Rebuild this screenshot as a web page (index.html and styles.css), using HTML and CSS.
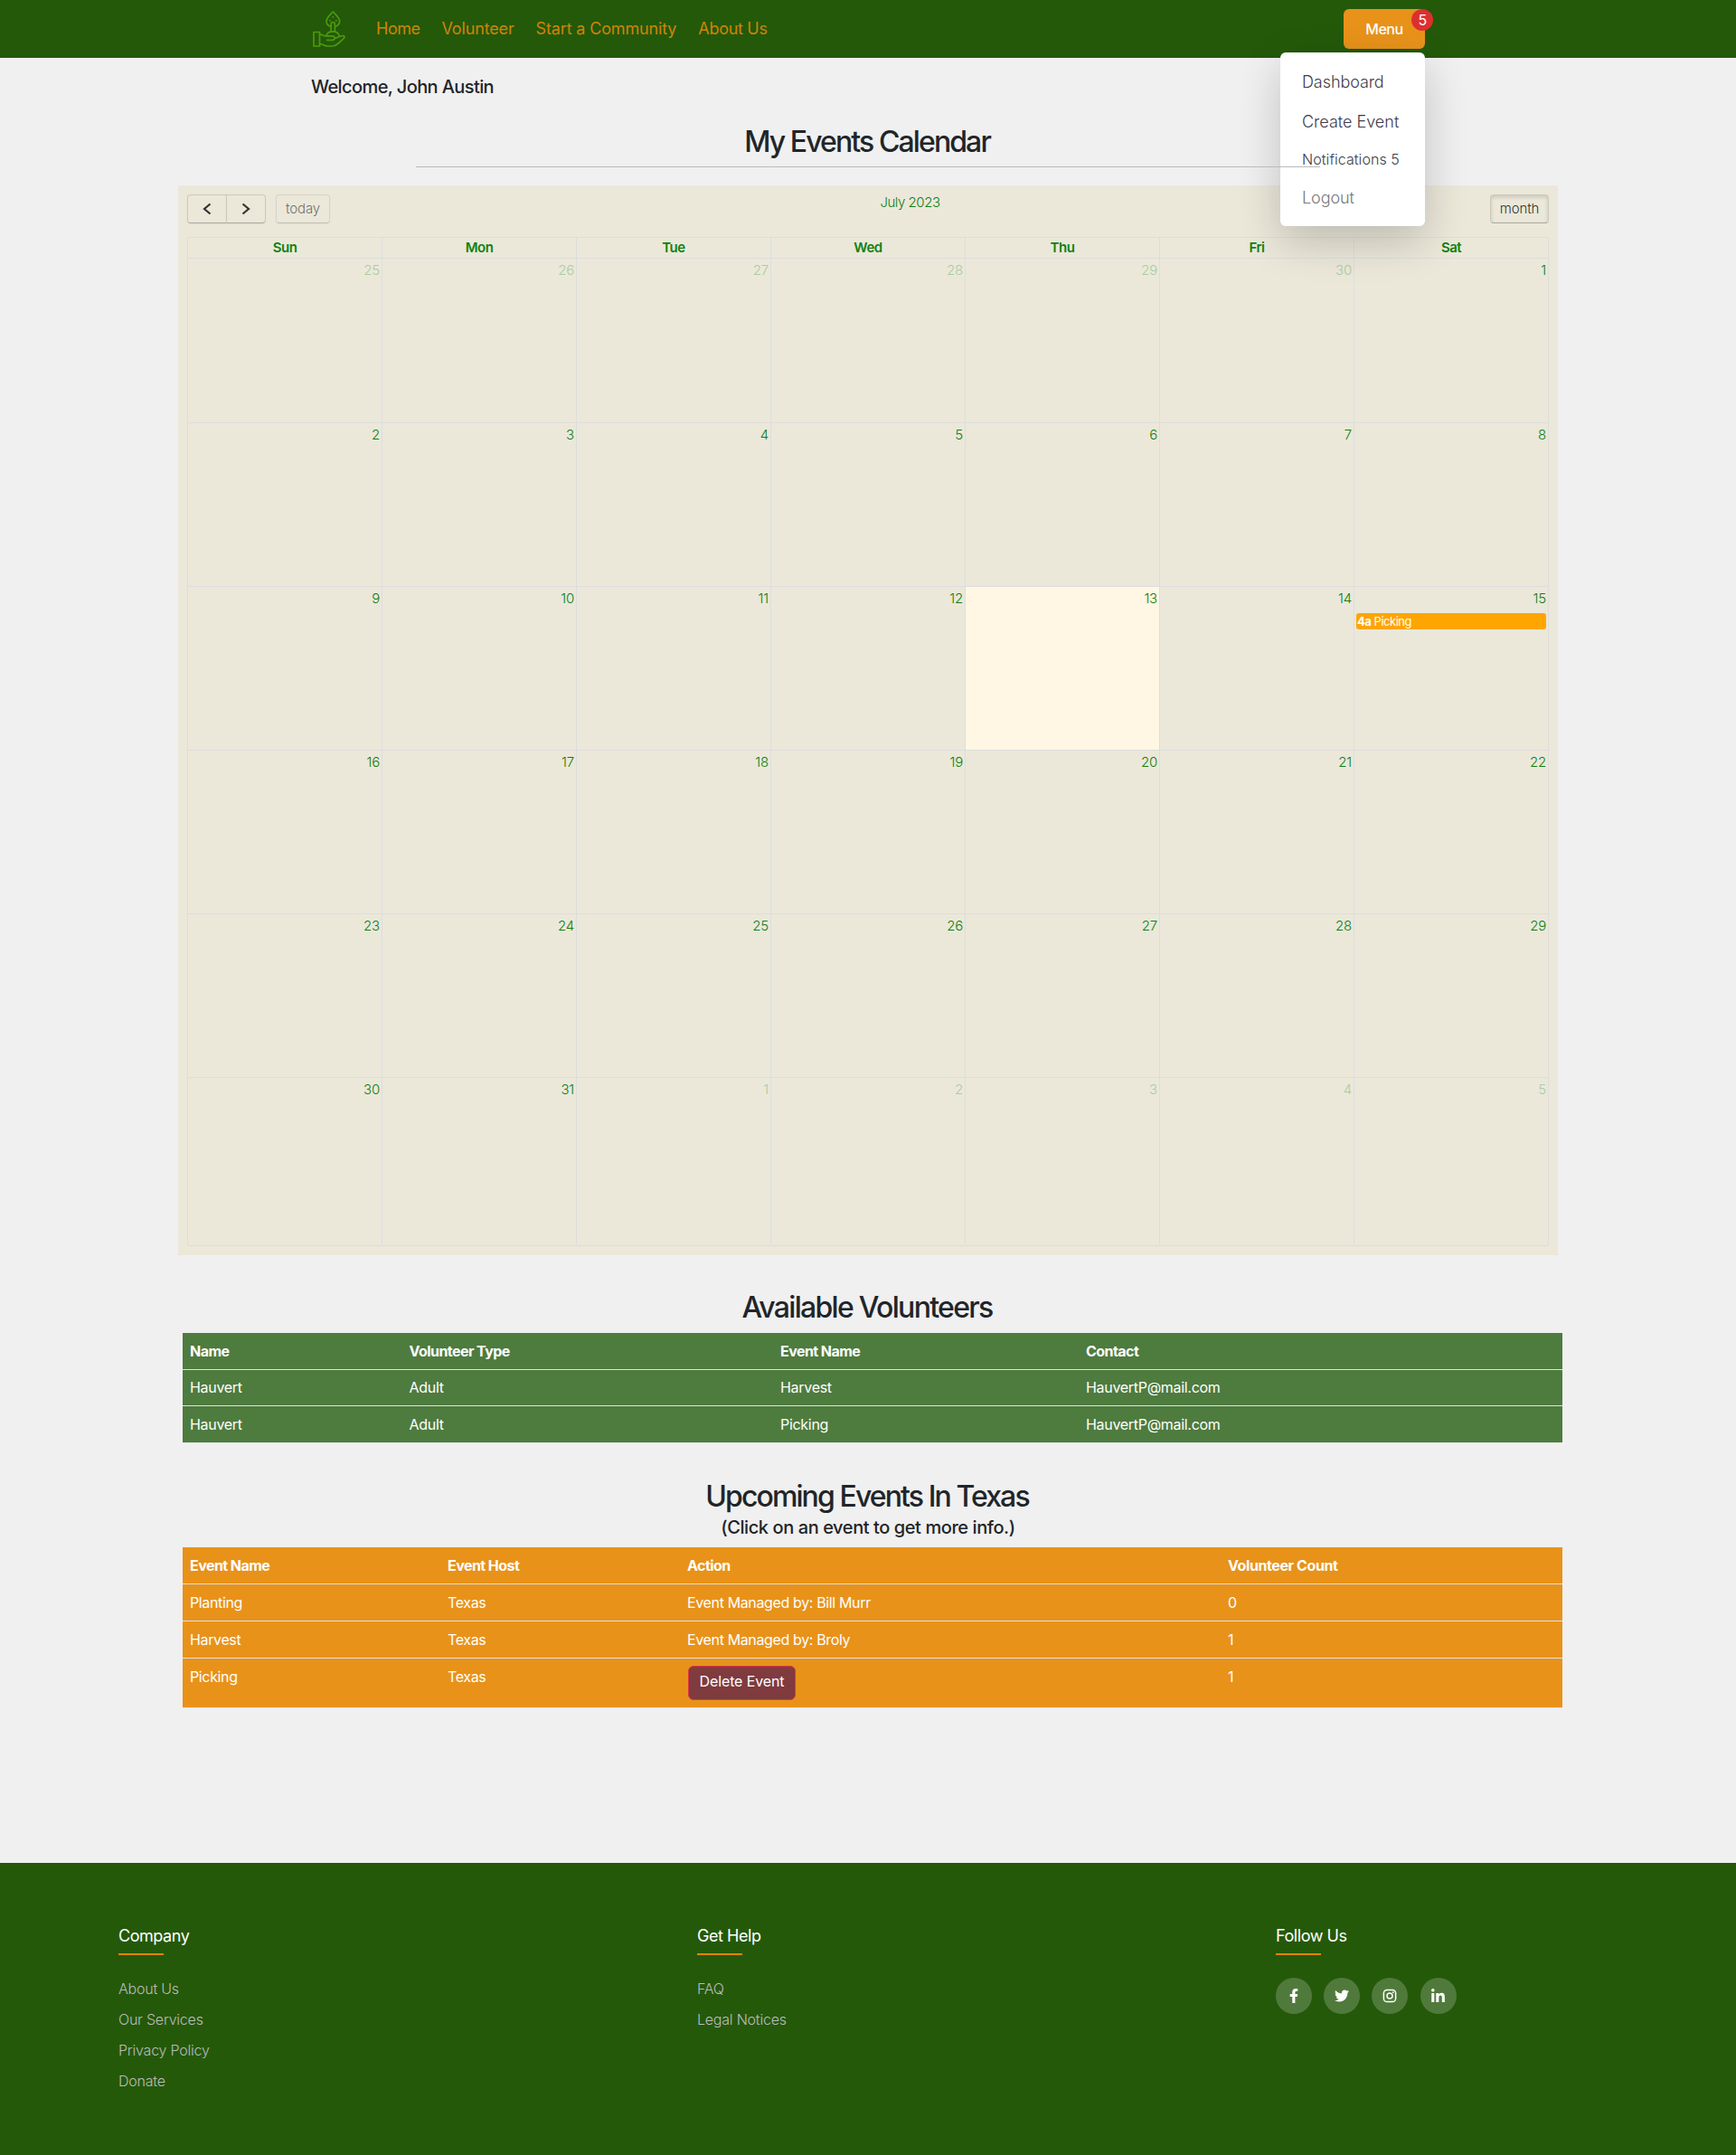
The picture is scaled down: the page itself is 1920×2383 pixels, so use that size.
FILE: index.html
```html
<!DOCTYPE html>
<html lang="en">
<head>
<meta charset="utf-8">
<title>My Events Calendar</title>
<link rel="stylesheet" href="styles.css">
</head>
<body>
<header class="navbar">
  <svg class="logo" viewBox="0 0 36 40" width="36" height="40" fill="none" stroke="#4b9a0b" stroke-width="1.7" stroke-linejoin="round" stroke-linecap="round">
    <path d="M19.500 17.200C16.500 16.400 15 14 15 11.300C15 7.500 19 4.500 22.300 1C25.600 4.500 29.600 7.500 29.600 11.300C29.600 14 28.100 16.400 25.100 17.200"/>
    <path d="M20.200 23V14.800a2.100 2.100 0 0 1 4.200 0V23"/>
    <path d="M14.800 27.400c.8-3 3.500-4.600 7.300-4.600s6.300 1.800 7 4.800"/>
    <path d="M1 23.500h6.500v15.500H1z"/>
    <path d="M7.500 25.800c2.500 0 3.800 2 6.500 2h7.700c3.200 0 3.200 4.500 0 4.500h-6M24.300 30.500l7.200-2.700c3-1 4.500 1 2.500 2.800L27.500 36.500c-2 1.800-3.500 2.500-6 2.500h-5.500c-3.500 0-5-2.500-8.500-2.500"/>
    <path d="M22.300 6.500v.400M19 10.700v.300M25.800 10.700v.300"/>
  </svg>
  <nav class="links">
    <a class="l-home">Home</a><a class="l-vol">Volunteer</a><a class="l-start">Start a Community</a><a class="l-about">About Us</a>
  </nav>
  <div class="menu">
    <button class="menu-btn">Menu</button>
    <span class="badge">5</span>
    <div class="dropdown">
      <a class="d-dash">Dashboard</a>
      <a class="d-create">Create Event</a>
      <a class="d-note">Notifications 5</a>
      <a class="d-out">Logout</a>
    </div>
  </div>
</header>
<main>
  <h5 class="welcome">Welcome, John Austin</h5>
  <h2 class="title t-cal">My Events Calendar</h2>
  <hr class="rule">
  <section class="calendar">
    <div class="toolbar">
      <div class="tool-left">
        <div class="group">
          <button class="cal-btn arrow"><svg width="10" height="14" viewBox="0 0 10 14"><path d="M8.500 1.500L2 7l6.500 5.500" fill="none" stroke="#333" stroke-width="2.200"/></svg></button><button class="cal-btn arrow"><svg width="10" height="14" viewBox="0 0 10 14"><path d="M1.500 1.500L8 7l-6.500 5.500" fill="none" stroke="#333" stroke-width="2.200"/></svg></button>
        </div>
        <button class="cal-btn today-btn">today</button>
      </div>
      <div class="cal-title">July 2023</div>
      <button class="cal-btn month-btn">month</button>
    </div>
    <div class="grid">
      <div class="week head"><b>Sun</b><b>Mon</b><b>Tue</b><b>Wed</b><b>Thu</b><b>Fri</b><b>Sat</b></div>
      <div class="week first"><div class="day other">25</div><div class="day other">26</div><div class="day other">27</div><div class="day other">28</div><div class="day other">29</div><div class="day other">30</div><div class="day">1</div></div>
      <div class="week"><div class="day">2</div><div class="day">3</div><div class="day">4</div><div class="day">5</div><div class="day">6</div><div class="day">7</div><div class="day">8</div></div>
      <div class="week"><div class="day">9</div><div class="day">10</div><div class="day">11</div><div class="day">12</div><div class="day now">13</div><div class="day">14</div><div class="day">15<div class="event"><b>4a</b> Picking</div></div></div>
      <div class="week"><div class="day">16</div><div class="day">17</div><div class="day">18</div><div class="day">19</div><div class="day">20</div><div class="day">21</div><div class="day">22</div></div>
      <div class="week"><div class="day">23</div><div class="day">24</div><div class="day">25</div><div class="day">26</div><div class="day">27</div><div class="day">28</div><div class="day">29</div></div>
      <div class="week last"><div class="day">30</div><div class="day">31</div><div class="day other">1</div><div class="day other">2</div><div class="day other">3</div><div class="day other">4</div><div class="day other">5</div></div>
    </div>
  </section>

  <h2 class="title t-vol">Available Volunteers</h2>
  <div class="table volunteers">
    <div class="row th"><span>Name</span><span>Volunteer Type</span><span>Event Name</span><span>Contact</span></div>
    <div class="row short"><span>Hauvert</span><span>Adult</span><span>Harvest</span><span>HauvertP@mail.com</span></div>
    <div class="row"><span>Hauvert</span><span>Adult</span><span>Picking</span><span>HauvertP@mail.com</span></div>
  </div>

  <h2 class="title t-up">Upcoming Events In Texas</h2>
  <h5 class="sub">(Click on an event to get more info.)</h5>
  <div class="table events">
    <div class="row th"><span>Event Name</span><span>Event Host</span><span>Action</span><span>Volunteer Count</span></div>
    <div class="row"><span>Planting</span><span>Texas</span><span>Event Managed by: Bill Murr</span><span>0</span></div>
    <div class="row"><span>Harvest</span><span>Texas</span><span>Event Managed by: Broly</span><span>1</span></div>
    <div class="row tall"><span>Picking</span><span>Texas</span><span><button class="delete">Delete Event</button></span><span>1</span></div>
  </div>
</main>
<footer class="footer">
  <div class="col"><h4 class="f-co">Company</h4><ul><li>About Us</li><li>Our Services</li><li>Privacy Policy</li><li>Donate</li></ul></div>
  <div class="col"><h4 class="f-help">Get Help</h4><ul><li>FAQ</li><li>Legal Notices</li></ul></div>
  <div class="col"><h4 class="f-follow">Follow Us</h4>
    <div class="social">
      <a><svg height="16" viewBox="0 0 320 512"><path d="M279.140 288l14.220-92.660h-88.910v-60.130c0-25.350 12.420-50.060 52.240-50.060h40.420V6.260S260.430 0 225.360 0c-73.220 0-121.080 44.380-121.080 124.720v70.620H22.890V288h81.390v224h100.170V288z"/></svg></a>
      <a><svg height="16" viewBox="0 0 512 512"><path d="M459.370 151.716c.325 4.548.325 9.097.325 13.645 0 138.720-105.583 298.558-298.558 298.558-59.452 0-114.680-17.219-161.137-47.106 8.447.974 16.568 1.299 25.340 1.299 49.055 0 94.213-16.568 130.274-44.832-46.132-.975-84.792-31.188-98.112-72.772 6.498.974 12.995 1.624 19.818 1.624 9.421 0 18.843-1.300 27.614-3.573-48.081-9.747-84.143-51.980-84.143-102.985v-1.299c13.969 7.797 30.214 12.670 47.431 13.319-28.264-18.843-46.781-51.005-46.781-87.391 0-19.492 5.197-37.360 14.294-52.954 51.655 63.675 129.300 105.258 216.365 109.807-1.624-7.797-2.599-15.918-2.599-24.040 0-57.828 46.782-104.934 104.934-104.934 30.213 0 57.502 12.670 76.670 33.137 23.715-4.548 46.456-13.320 66.599-25.340-7.798 24.366-24.366 44.833-46.132 57.827 21.117-2.273 41.584-8.122 60.426-16.243-14.292 20.791-32.161 39.308-52.628 54.253z"/></svg></a>
      <a><svg height="16" width="16" viewBox="0 0 16 16"><g fill="none" stroke="#fff" stroke-width="1.500"><rect x="1.400" y="1.400" width="13.200" height="13.200" rx="3.600"/><circle cx="8" cy="8" r="3"/></g><circle cx="11.800" cy="4.200" r=".9"/></svg></a>
      <a><svg height="17" viewBox="0 0 448 512"><path d="M100.280 448H7.400V148.900h92.880zM53.790 108.100C24.090 108.100 0 83.500 0 53.800a53.790 53.790 0 0 1 107.580 0c0 29.700-24.100 54.300-53.790 54.300zM447.900 448h-92.680V302.400c0-34.700-.7-79.200-48.290-79.200-48.290 0-55.690 37.700-55.690 76.700V448h-92.780V148.900h89.080v40.800h1.300c12.400-23.500 42.690-48.300 87.880-48.300 94 0 111.280 61.900 111.280 142.300V448z"/></svg></a>
    </div>
  </div>
</footer>
</body>
</html>
```
FILE: styles.css
```css
* { box-sizing: border-box; }
body { margin: 0; background: #f0f0f0; color: #212529; font-family: Inter, sans-serif; font-size: 16px; letter-spacing: -0.03em; }
h2, h4, h5, ul { margin: 0; padding: 0; font-weight: 500; }
button { font: inherit; letter-spacing: inherit; padding: 0; }

.navbar { height: 64px; background: #24590a; display: flex; align-items: center; padding: 0 344px 0 346px; }
.links { display: flex; gap: 24px; margin-left: 34px; padding-bottom: 1px; font-size: 18px; color: #cf8407; flex: 1; letter-spacing: -0.15px; }
.l-home { letter-spacing: -0.48px; }
.l-about { letter-spacing: -0.3px; }
.menu { position: relative; }
.menu-btn { display: block; width: 90px; height: 44px; border: 0; border-radius: 6px; background: #e8921a; color: #fff; font-weight: 500; }
.badge { position: absolute; left: 75px; top: 0; width: 24px; height: 24px; line-height: 24px; border-radius: 50%; background: #dc3030; color: #fff; text-align: center; }
.dropdown { position: absolute; right: 0; top: 48px; width: 160px; height: 192px; padding: 11px 24px; background: #fff; border-radius: 6px; box-shadow: 0 16px 48px rgba(0,0,0,.2); color: #3c3c4a; font-size: 18px; font-weight: 300; letter-spacing: -0.08px; z-index: 2; }
.dropdown a { display: block; line-height: 44px; white-space: nowrap; }
.dropdown .d-create { letter-spacing: 0; }
.dropdown .d-note { font-size: 16px; line-height: 39px; margin-bottom: 1px; letter-spacing: 0.06px; }
.dropdown .d-out { color: #787878; }

.welcome { margin: 20px 0 0 344px; font-size: 20px; line-height: 24px; letter-spacing: -0.6px; }
.title { font-size: 32px; line-height: 38px; text-align: center; letter-spacing: -1.9px; padding-right: 2px; }
.t-cal { margin-top: 30px; }
.rule { position: relative; z-index: 3; width: 1000px; height: 1px; margin: 8px auto 20px; border: 0; background: #b9babb; }

.calendar { width: 1526px; height: 1183px; margin-left: 197px; padding: 10px; background: #ebe8da; color: #0f7f0f; font-size: 15px; font-weight: 300; }
.toolbar { display: flex; justify-content: space-between; height: 47px; align-items: flex-start; }
.tool-left, .group { display: flex; }
.cal-btn { height: 32px; padding-bottom: 2px; background: transparent; border: 1px solid #cbc9bc; border-bottom-color: #aaa89d; border-radius: 4px; color: #333; box-shadow: 0 1px 2px rgba(0,0,0,.05); }
.arrow { width: 44px; padding: 0; display: flex; align-items: center; justify-content: center; }
.arrow:first-child { border-radius: 4px 0 0 4px; }
.arrow:last-child { border-radius: 0 4px 4px 0; margin-left: -1px; }
.today-btn { width: 60px; margin-left: 11px; opacity: .65; letter-spacing: -0.1px; }
.month-btn { width: 65px; box-shadow: inset 0 2px 4px rgba(0,0,0,.15); letter-spacing: -0.1px; }
.cal-title { line-height: 18px; letter-spacing: -0.45px; }
.grid { width: 1506px; border: 1px solid #dddddd; height: 1116px; }
.week { display: grid; grid-template-columns: repeat(6, 215px) 1fr; height: 181px; border-top: 1px solid #ddd; }
.head { height: 22px; border: 0; text-align: center; line-height: 22px; color: #108210; }
.head b { font-weight: 600; }
.week > * { border-right: 1px solid #ddd; }
.week > :last-child { border-right: 0; }
.first { height: 182px; }
.last { height: 185px; }
.day { padding: 3px 2px 0 2px; text-align: right; line-height: 20px; letter-spacing: -0.2px; }
.other { color: #a9cda2; }
.now { background: #fff7e3; }
.event { height: 18px; margin-top: 6px; padding-left: 1px; border-radius: 3px; background: #ffa500; color: #fff; text-align: left; font-size: 13px; line-height: 19px; font-weight: 400; letter-spacing: -0.48px; }
.event b { font-weight: 700; }

.t-vol { margin: 39px 0 9px; letter-spacing: -1.7px; }
.t-up { margin-top: 40px; }
.sub { margin: 3px 0 10px; text-align: center; font-size: 20px; line-height: 24px; letter-spacing: -0.42px; }
.table { width: 1526px; margin-left: 202px; color: #fff; font-size: 16px; letter-spacing: -0.3px; }
.row { display: grid; height: 41px; line-height: 40px; padding-left: 8px; border-bottom: 1px solid #dee2e6; }
.th { font-weight: 700; letter-spacing: -0.55px; }
.volunteers .row { background: #4e7b3e; grid-template-columns: 242.5px 410.5px 338px 1fr; }
.volunteers .short { height: 40px; line-height: 39px; }
.events .row { background: #e8921a; grid-template-columns: 285px 265px 598px 1fr; }
.events .row:not(.th) { letter-spacing: -0.36px; }
.events .th span:last-child { letter-spacing: -0.4px; }
.events .tall { height: 55px; }
.delete { display: block; width: 119px; height: 38px; margin: 8px 0 0 1px; padding-bottom: 4px; line-height: 20px; background: #7f3b3e; border: 1px solid #dc3545; border-radius: 6px; color: #fff; letter-spacing: -0.12px; }

.footer { margin-top: 171px; height: 323px; background: #24590a; display: grid; grid-template-columns: 640px 640px 1fr; padding: 70px 0 0 131px; }
.col h4 { font-size: 18px; line-height: 22px; height: 52px; color: #fff; font-weight: 400; letter-spacing: -0.45px; }
.col h4::after { content: ""; display: block; width: 50px; height: 2px; margin-top: 8px; background: #ff8000; }
.col ul { list-style: none; line-height: 34px; color: #bbb; font-weight: 300; letter-spacing: -0.22px; }
.social { display: flex; gap: 13.2px; padding-top: 5px; }
.social a { width: 40px; height: 40px; border-radius: 50%; background: #507a3b; display: flex; align-items: center; justify-content: center; }
.social svg { fill: #fff; }
```
